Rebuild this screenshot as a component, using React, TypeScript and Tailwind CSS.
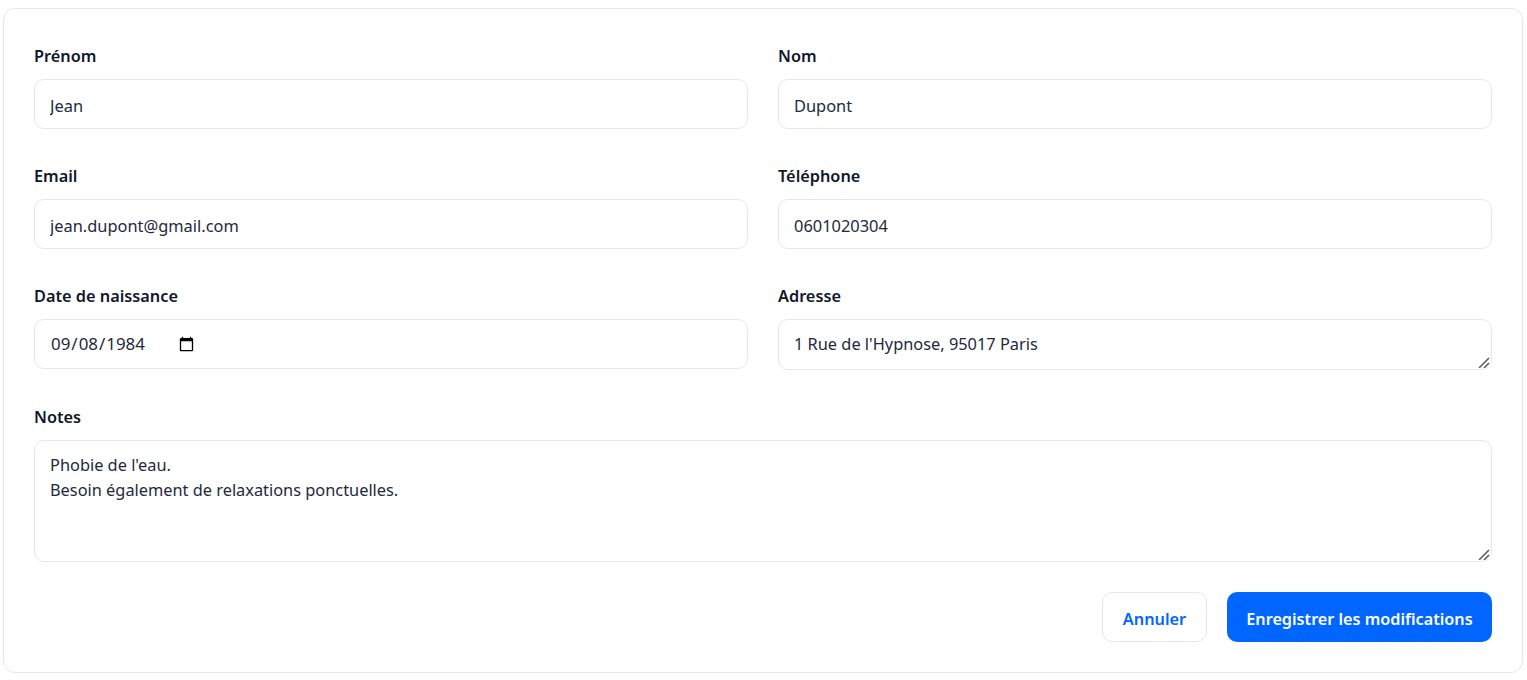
const inputClass =
  "w-full h-[50px] rounded-[10px] border border-[#e2e8f0] bg-white pl-[15px] pt-[2px] text-[16.4px] text-[#1e293b] outline-none";
const textareaClass =
  "block w-full resize-none rounded-[10px] border border-[#e2e8f0] bg-white px-[15px] py-[12px] text-[16.35px] leading-[25px] text-[#1e293b] outline-none";

function Field({ label, children }: { label: string; children: React.ReactNode }) {
  return (
    <div>
      <label className="block mb-[6px] text-[16.3px] leading-[34px] font-semibold text-[#0f172a]">{label}</label>
      {children}
    </div>
  );
}

function ResizeGrip() {
  return (
    <svg className="absolute right-[2px] bottom-[2px] pointer-events-none" width="12" height="12" viewBox="0 0 12 12">
      <path d="M1 12 L11 2" stroke="#555" strokeWidth="1.4" />
      <path d="M6 12 L11 7" stroke="#555" strokeWidth="1.4" />
    </svg>
  );
}

export default function App() {
  return (
    <div className="h-[680px] overflow-hidden bg-white pt-[8px] pl-[3px] pr-[4px] font-['Noto_Sans','Open_Sans',sans-serif]">
      <div className="h-[665px] rounded-[12px] border border-[#e2e8f0] bg-white p-[30px]">
        <div className="grid grid-cols-2 gap-[30px]">
          <Field label="Prénom">
            <input className={inputClass} defaultValue="Jean" />
          </Field>
          <Field label="Nom">
            <input className={inputClass} defaultValue="Dupont" />
          </Field>
          <Field label="Email">
            <input className={inputClass} defaultValue="jean.dupont@gmail.com" />
          </Field>
          <Field label="Téléphone">
            <input className={inputClass} defaultValue="0601020304" />
          </Field>
          <Field label="Date de naissance">
            <input
              type="date"
              className="w-full h-[50px] rounded-[10px] border border-[#e2e8f0] bg-white pl-[15px] pr-[550px] text-[16.9px] text-[#1e293b] outline-none"
              defaultValue="1984-09-08"
            />
          </Field>
          <Field label="Adresse">
            <div className="relative">
              <textarea className={`${textareaClass} h-[51px]`} defaultValue="1 Rue de l'Hypnose, 95017 Paris" />
              <ResizeGrip />
            </div>
          </Field>
        </div>
        <div className="mt-[30px]">
          <Field label="Notes">
            <div className="relative">
              <textarea
                className={`${textareaClass} h-[122px]`}
                defaultValue={"Phobie de l'eau.\nBesoin également de relaxations ponctuelles."}
              />
              <ResizeGrip />
            </div>
          </Field>
        </div>
        <div className="mt-[30px] flex justify-end gap-[20px]">
          <button className="h-[50px] w-[105px] rounded-[10px] border border-[#e2e8f0] bg-white pt-[4px] text-[16.3px] font-semibold text-[#0066ff]">
            Annuler
          </button>
          <button className="h-[50px] w-[265px] rounded-[10px] bg-[#0066ff] pt-[4px] text-[16.2px] font-semibold text-white">
            Enregistrer les modifications
          </button>
        </div>
      </div>
    </div>
  );
}
